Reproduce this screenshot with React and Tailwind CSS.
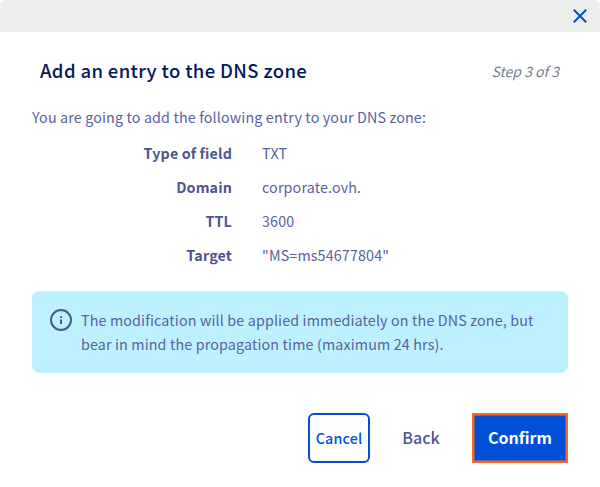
import React from "react";

const fields = [
  ["Type of field", "TXT"],
  ["Domain", "corporate.ovh."],
  ["TTL", "3600"],
  ["Target", '"MS=ms54677804"'],
];

export default function App() {
  return (
    <div className="h-[487px] w-[600px] overflow-hidden rounded-md bg-white font-['Noto_Sans_CJK_SC','Noto_Sans',sans-serif] text-[14.3px] tracking-[0.14px] text-[#595fa0]">
      <div className="flex h-8 items-center justify-end bg-[#ebeeeb] pr-[13px]">
        <button aria-label="Close">
          <svg width="14" height="14" viewBox="0 0 14 14" className="block" fill="none" stroke="#0050d7" strokeWidth="2">
            <path d="M0.8 0.8 13.2 13.2M13.2 0.8 0.8 13.2" />
          </svg>
        </button>
      </div>
      <header className="flex h-[73px] items-center justify-between pt-[4px] pr-[41px] pl-10">
        <h1 className="text-[18.5px] font-medium tracking-[0.36px] whitespace-nowrap text-[#00185e]">Add an entry to the DNS zone</h1>
        <span className="pt-[2px] text-[14px] tracking-normal whitespace-nowrap text-[#757f8c] italic">Step 3 of 3</span>
      </header>
      <p className="h-6 pl-8 leading-6 whitespace-nowrap">You are going to add the following entry to your DNS zone:</p>
      <dl className="mt-3 flex flex-col gap-[10px] leading-6">
        {fields.map(([label, value]) => (
          <div key={label} className="flex gap-[30px]">
            <dt className="w-[232px] text-right font-bold text-[#4d5592]">{label}</dt>
            <dd>{value}</dd>
          </div>
        ))}
      </dl>
      <div className="mt-6 ml-8 flex h-[82px] w-[536px] gap-[9px] rounded-lg bg-[#bef1ff] pt-[18px] pl-[18px]">
        <svg width="22" height="22" viewBox="0 0 22 22" className="block shrink-0" fill="none">
          <circle cx="11" cy="11" r="10" stroke="#4d5592" strokeWidth="2" />
          <path d="M11 10.4v4.6M11 7.2v1.8" stroke="#4d5592" strokeWidth="2" />
        </svg>
        <p className="-mt-px leading-6 whitespace-nowrap">
          The modification will be applied immediately on the DNS zone, but
          <br />
          bear in mind the propagation time (maximum 24 hrs).
        </p>
      </div>
      <div className="mt-10 flex h-[50px] justify-end pr-8">
        <button className="w-[62px] rounded-md border-2 border-[#0050d7] text-[14.3px] font-medium text-[#0050d7]">Cancel</button>
        <button className="w-[102px] pb-[2px] text-[16px] font-medium tracking-[0.1px] text-[#4d5592]">Back</button>
        <button className="w-24 border-2 border-[#f96724] bg-[#0050d7] pb-[2px] text-[16px] font-bold tracking-normal text-white inset-ring inset-ring-[#7a607d]">Confirm</button>
      </div>
    </div>
  );
}
